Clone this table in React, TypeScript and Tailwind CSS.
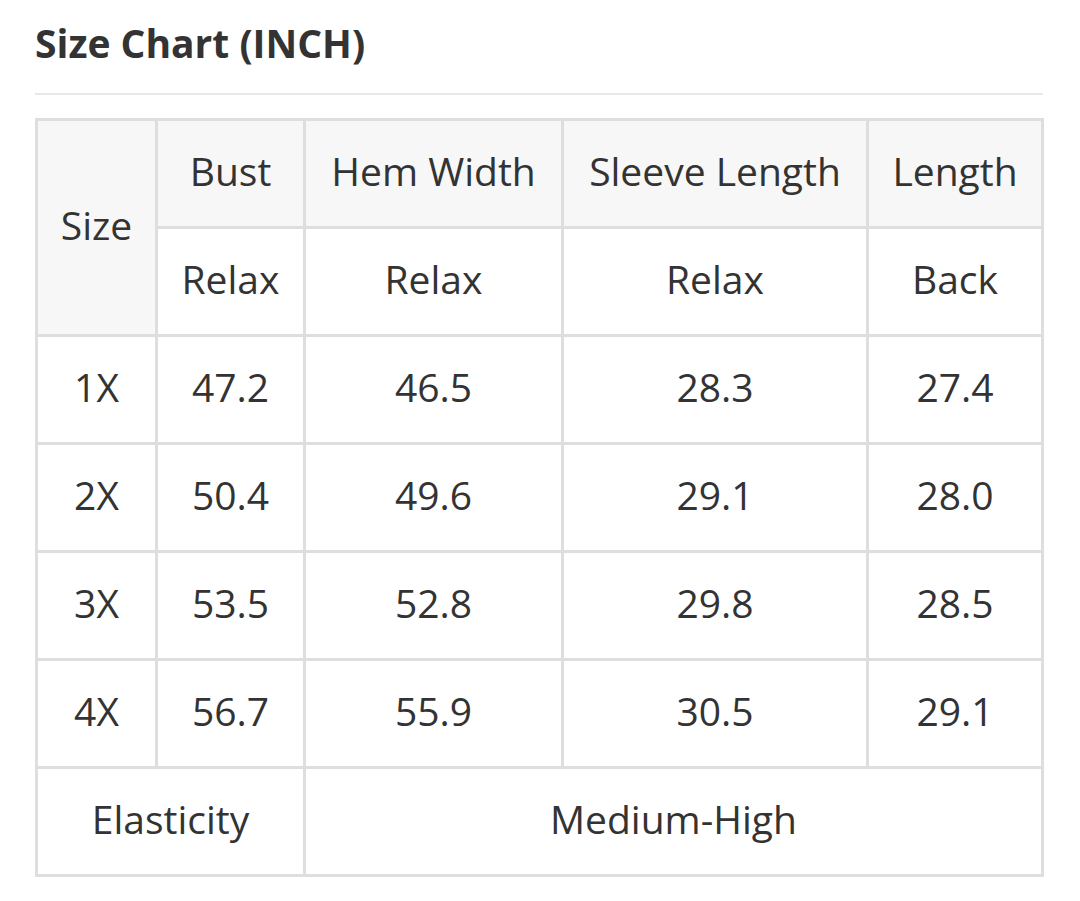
import React from "react";

const rows = [
  ["1X", "47.2", "46.5", "28.3", "27.4"],
  ["2X", "50.4", "49.6", "29.1", "28.0"],
  ["3X", "53.5", "52.8", "29.8", "28.5"],
  ["4X", "56.7", "55.9", "30.5", "29.1"],
];

const cell = "border-[3px] border-[#dedede] text-center align-middle h-[108px] px-0 pt-0 pb-[5px]";

export default function App() {
  return (
    <div
      className="w-[1080px] h-[901px] bg-white text-[#333333] px-[35px] pt-[18px]"
      style={{ fontFamily: '"Open Sans", "Liberation Sans", sans-serif' }}
    >
      {/* Title */}
      <h2 className="text-[39px] font-bold leading-[50px] text-[#333333]">Size Chart (INCH)</h2>
      <div className="mt-[25px] h-[2px] w-[1008px] bg-[#e8e8e8]" />

      {/* Size table */}
      <table className="mt-[23px] w-[1006px] table-fixed border-collapse text-[39px] font-normal">
        <colgroup>
          <col className="w-[120px]" />
          <col className="w-[148px]" />
          <col className="w-[258px]" />
          <col className="w-[305px]" />
          <col className="w-[175px]" />
        </colgroup>
        <thead>
          <tr>
            <th rowSpan={2} className={`${cell} bg-[#f7f7f7] font-normal`}>Size</th>
            <th className={`${cell} bg-[#f7f7f7] font-normal`}>Bust</th>
            <th className={`${cell} bg-[#f7f7f7] font-normal`}>Hem Width</th>
            <th className={`${cell} bg-[#f7f7f7] font-normal`}>Sleeve Length</th>
            <th className={`${cell} bg-[#f7f7f7] font-normal`}>Length</th>
          </tr>
          <tr>
            <th className={`${cell} font-normal`}>Relax</th>
            <th className={`${cell} font-normal`}>Relax</th>
            <th className={`${cell} font-normal`}>Relax</th>
            <th className={`${cell} font-normal`}>Back</th>
          </tr>
        </thead>
        <tbody>
          {rows.map((r) => (
            <tr key={r[0]}>
              {r.map((v, i) => (
                <td key={i} className={cell}>{v}</td>
              ))}
            </tr>
          ))}
          <tr>
            <td colSpan={2} className={cell}>Elasticity</td>
            <td colSpan={3} className={cell}>Medium-High</td>
          </tr>
        </tbody>
      </table>
    </div>
  );
}
